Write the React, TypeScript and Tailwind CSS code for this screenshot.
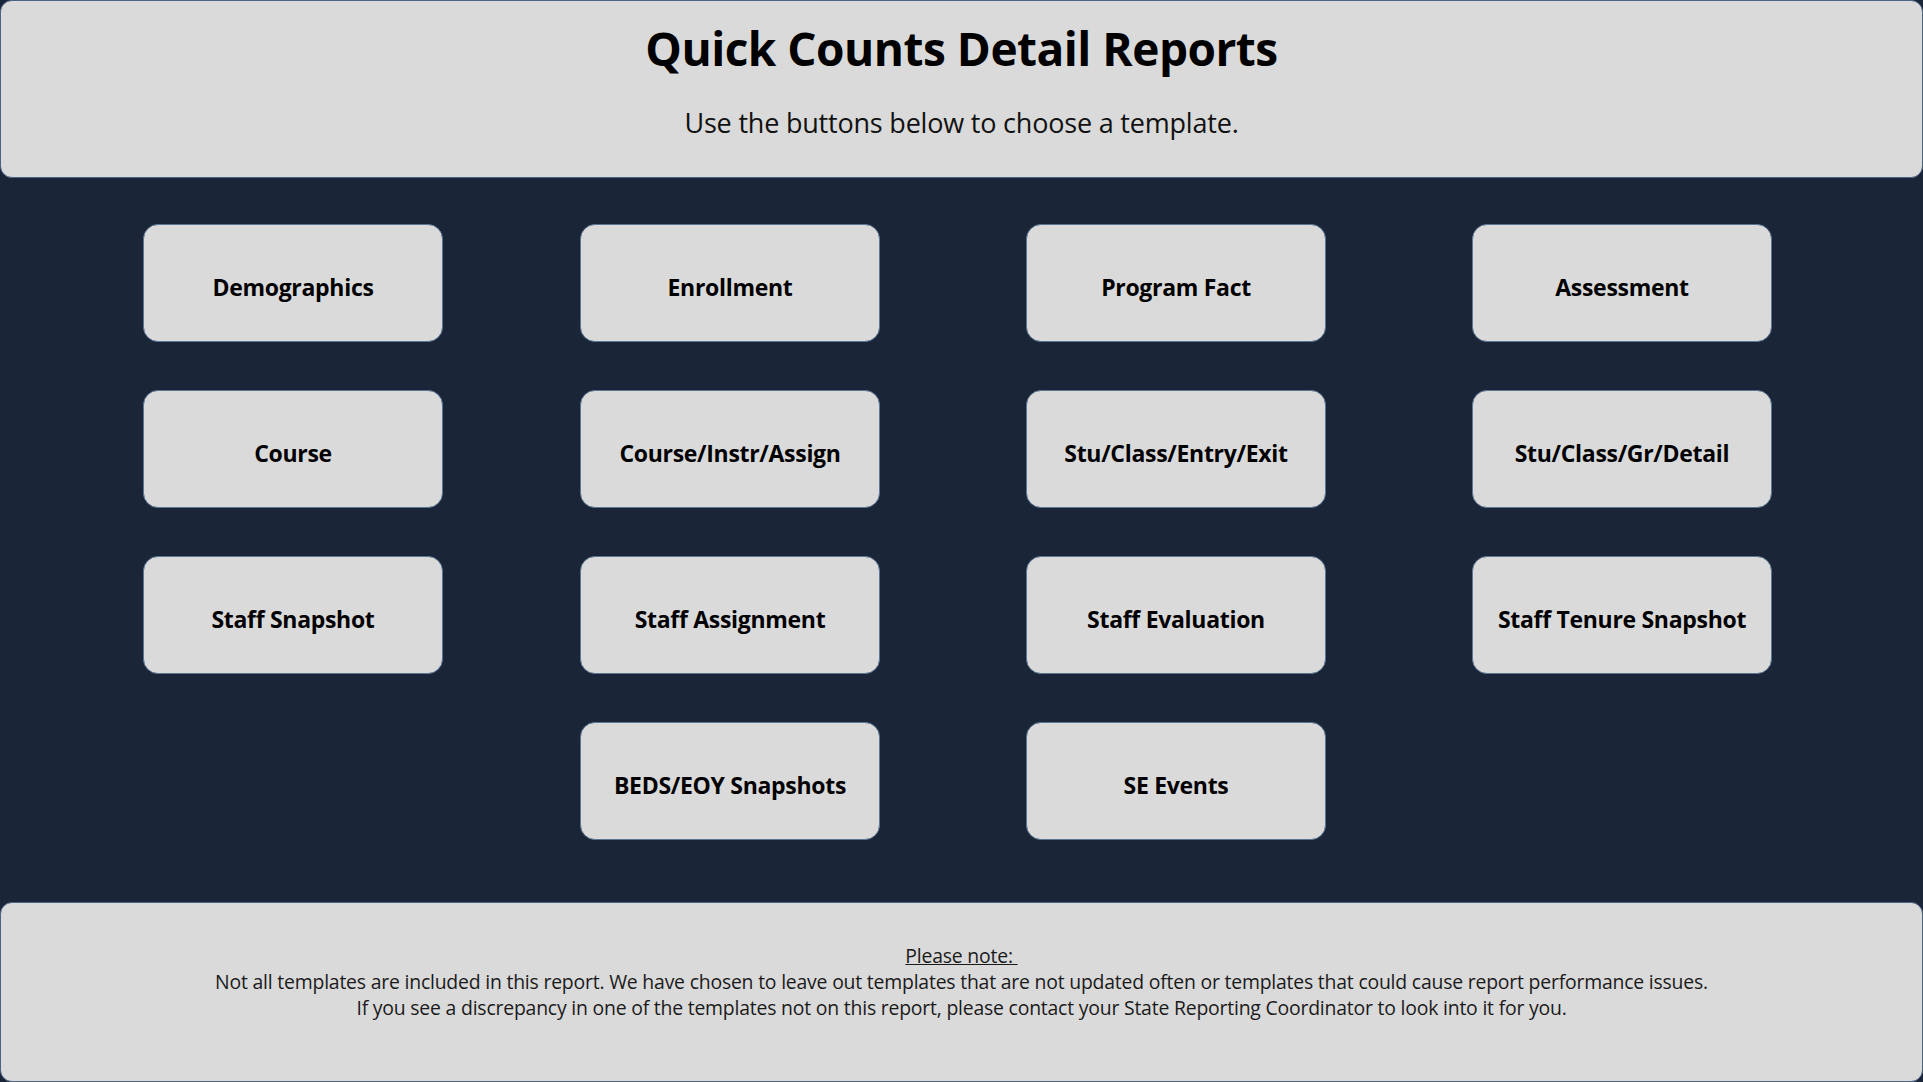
import React from "react";

const font = { fontFamily: '"Open Sans", "Noto Sans", "Liberation Sans", sans-serif' };

function Btn({ label }: { label: string }) {
  return (
    <div className="w-[300px] h-[118px] flex items-center justify-center pt-[8px] rounded-[15px] border border-[#5b7593] bg-[#dadada] text-[23px] font-bold text-black tracking-[-0.3px]">
      {label}
    </div>
  );
}

export default function App() {
  return (
    <div className="w-[1923px] h-[1082px] bg-[#1b2538] flex flex-col" style={font}>
      <div className="h-[178px] shrink-0 rounded-[12px] border border-[#4c6485] bg-[#dadada] flex flex-col items-center">
        <div className="mt-[17px] text-[46px] font-bold leading-[60px] text-black tracking-[-0.5px]">Quick Counts Detail Reports</div>
        <div className="mt-[28px] text-[27px] leading-[34px] text-[#111] tracking-[-0.2px]">Use the buttons below to choose a template.</div>
      </div>
      <div className="mt-[46px] pl-[143px] grid grid-cols-[437px_446px_446px_300px] gap-y-[48px]">
        <Btn label="Demographics" />
        <Btn label="Enrollment" />
        <Btn label="Program Fact" />
        <Btn label="Assessment" />
        <Btn label="Course" />
        <Btn label="Course/Instr/Assign" />
        <Btn label="Stu/Class/Entry/Exit" />
        <Btn label="Stu/Class/Gr/Detail" />
        <Btn label="Staff Snapshot" />
        <Btn label="Staff Assignment" />
        <Btn label="Staff Evaluation" />
        <Btn label="Staff Tenure Snapshot" />
        <div />
        <Btn label="BEDS/EOY Snapshots" />
        <Btn label="SE Events" />
        <div />
      </div>
      <div className="mt-[62px] h-[180px] shrink-0 rounded-[12px] border border-[#4c6485] bg-[#dadada] flex flex-col items-center pt-[40px] text-[19.4px] leading-[26px] text-[#1a1a1a] tracking-[-0.2px]">
        <div className="underline">Please note:&nbsp;</div>
        <div>Not all templates are included in this report. We have chosen to leave out templates that are not updated often or templates that could cause report performance issues.</div>
        <div>If you see a discrepancy in one of the templates not on this report, please contact your State Reporting Coordinator to look into it for you.</div>
      </div>
    </div>
  );
}
